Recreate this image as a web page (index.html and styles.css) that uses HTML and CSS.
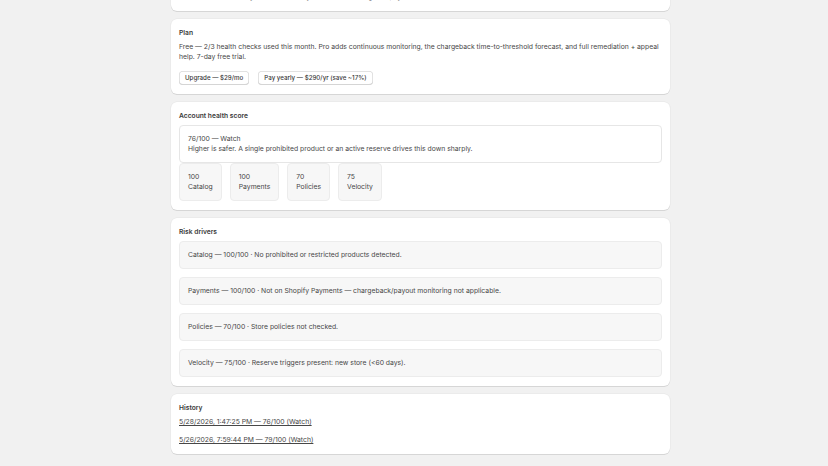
FILE: index.html
```html
<!DOCTYPE html>
<html lang="en">
<head>
<meta charset="utf-8">
<title>Account health</title>
<link rel="stylesheet" href="styles.css">
</head>
<body>
<main class="page">
  <section class="card card-cut">
    <h2 class="title">Health check</h2>
    <p class="text">Run a health check anytime to see how your store scores against payout and reserve risk rules.</p>
  </section>

  <section class="card">
    <h2 class="title">Plan</h2>
    <p class="text">Free — 2/3 health checks used this month. Pro adds continuous monitoring, the chargeback time-to-threshold forecast, and full remediation + appeal help. 7-day free trial.</p>
    <div class="actions">
      <button class="btn">Upgrade — $29/mo</button>
      <button class="btn">Pay yearly — $290/yr (save ~17%)</button>
    </div>
  </section>

  <section class="card">
    <h2 class="title">Account health score</h2>
    <div class="score-box">
      <p class="text">76/100 — Watch</p>
      <p class="text">Higher is safer. A single prohibited product or an active reserve drives this down sharply.</p>
    </div>
    <div class="stats">
      <div class="stat"><p class="text">100</p><p class="text">Catalog</p></div>
      <div class="stat"><p class="text">100</p><p class="text">Payments</p></div>
      <div class="stat"><p class="text">70</p><p class="text">Policies</p></div>
      <div class="stat"><p class="text">75</p><p class="text">Velocity</p></div>
    </div>
  </section>

  <section class="card">
    <h2 class="title">Risk drivers</h2>
    <div class="drivers">
      <div class="driver"><p class="text">Catalog — 100/100 · No prohibited or restricted products detected.</p></div>
      <div class="driver"><p class="text">Payments — 100/100 · Not on Shopify Payments — chargeback/payout monitoring not applicable.</p></div>
      <div class="driver"><p class="text">Policies — 70/100 · Store policies not checked.</p></div>
      <div class="driver"><p class="text">Velocity — 75/100 · Reserve triggers present: new store (&lt;60 days).</p></div>
    </div>
  </section>

  <section class="card">
    <h2 class="title">History</h2>
    <div class="history">
      <a class="link" href="#">5/28/2026, 1:47:25 PM — 76/100 (Watch)</a>
      <a class="link" href="#">5/26/2026, 7:59:44 PM — 79/100 (Watch)</a>
    </div>
  </section>
</main>
</body>
</html>
```

FILE: styles.css
```css
* { box-sizing: border-box; }

html, body {
  margin: 0;
  padding: 0;
  background: #f1f1f1;
  height: 100%;
  overflow: hidden;
}

body {
  font-family: Inter, "Noto Sans", sans-serif;
  font-size: 6.8px;
  line-height: 10px;
  color: #474747;
  -webkit-font-smoothing: antialiased;
}

.page {
  display: flex;
  flex-direction: column;
  gap: 8px;
  padding: 0 158px 0 171px;
  margin-top: -31px;
}

.card {
  background: #ffffff;
  border-radius: 6px;
  padding: 8px 8px 9px;
  display: flex;
  flex-direction: column;
  box-shadow: 0 1px 0 0 rgba(26, 26, 26, 0.1), 0 0 0 0.5px rgba(26, 26, 26, 0.06);
}

.title {
  margin: 1px 0 4px;
  font-size: 6.7px;
  line-height: 10px;
  font-weight: 600;
  color: #3a3a3a;
}

.text {
  margin: 0;
  font-size: 6.8px;
  line-height: 10px;
  font-weight: 400;
}

.actions {
  display: flex;
  gap: 9px;
  margin-top: 9px;
}

.btn {
  font-family: Inter, "Noto Sans", sans-serif;
  font-size: 6.2px;
  line-height: 8px;
  font-weight: 550;
  color: #3a3a3a;
  background: #ffffff;
  border: 0;
  border-radius: 4px;
  height: 14px;
  padding: 0 6px;
  box-shadow: inset 0 0 0 0.75px #d9d9d9, inset 0 -1px 0 0 #c8c8c8;
  cursor: pointer;
}

.score-box {
  background: #ffffff;
  border: 1px solid #e6e6e6;
  border-radius: 4px;
  padding: 8px;
}

.stats {
  display: flex;
  gap: 8px;
}

.stat {
  background: #f7f7f7;
  border: 1px solid #ececec;
  border-radius: 4px;
  padding: 8px;
}

.drivers {
  display: flex;
  flex-direction: column;
  gap: 8px;
}

.driver {
  background: #f7f7f7;
  border: 1px solid #ececec;
  border-radius: 4px;
  padding: 8px;
}

.history {
  display: flex;
  flex-direction: column;
  gap: 8px;
}

.link {
  color: #474747;
  font-size: 6.8px;
  line-height: 10px;
  text-decoration: underline;
  text-underline-offset: 1px;
  align-self: flex-start;
}
```
